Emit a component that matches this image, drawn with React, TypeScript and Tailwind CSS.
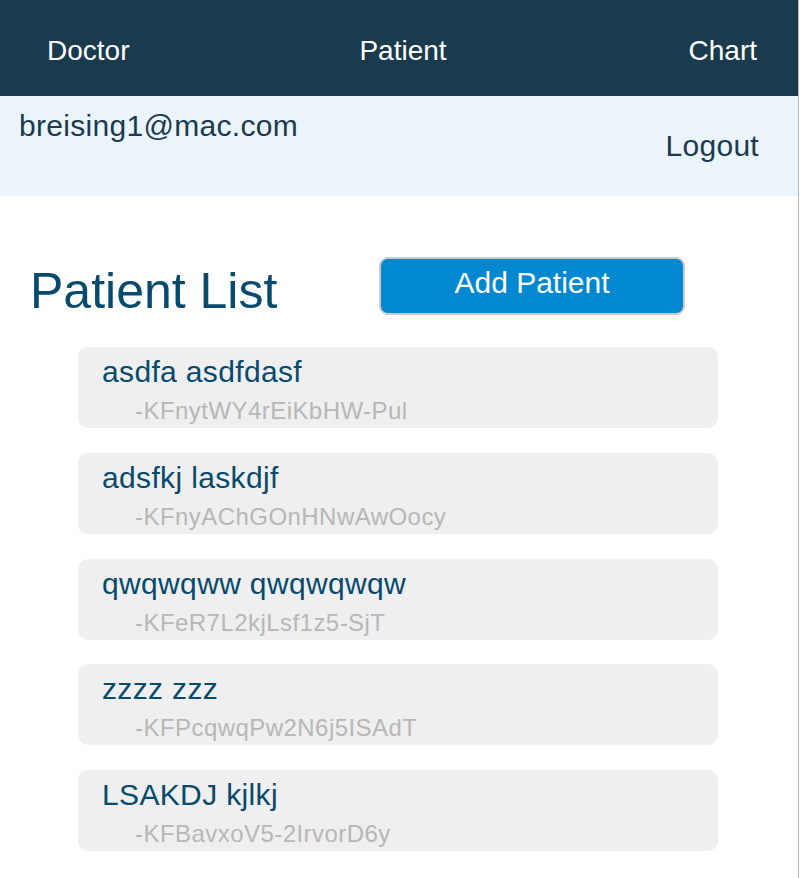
import React from "react";

const patients = [
  { name: "asdfa asdfdasf", id: "-KFnytWY4rEiKbHW-Pul" },
  { name: "adsfkj laskdjf", id: "-KFnyAChGOnHNwAwOocy" },
  { name: "qwqwqww qwqwqwqw", id: "-KFeR7L2kjLsf1z5-SjT" },
  { name: "zzzz zzz", id: "-KFPcqwqPw2N6j5ISAdT" },
  { name: "LSAKDJ kjlkj", id: "-KFBavxoV5-2IrvorD6y" },
];

export default function App() {
  return (
    <div
      className="w-[799px] min-h-[878px] bg-white border-r border-[#b8b8b8]"
      style={{ fontFamily: '"Liberation Sans", Arial, sans-serif' }}
    >
      <header className="h-[96px] bg-[#1a3a4e] flex items-center justify-between pl-[47px] pr-[41px] pt-[6px] text-white text-[28px] leading-none">
        <span>Doctor</span>
        <span className="mr-[12px]">Patient</span>
        <span>Chart</span>
      </header>
      <div className="h-[100px] bg-[#ebf4fb] flex justify-between items-start text-[#1b3a4f] text-[30px] leading-none">
        <span className="ml-[19px] mt-[15px] tracking-[0.3px]">breising1@mac.com</span>
        <span className="mr-[39px] mt-[35px] tracking-[0.3px]">Logout</span>
      </div>
      <div className="flex items-start pt-[61px]">
        <h1 className="w-[379px] pl-[30px] mt-[9px] text-[50px] leading-none text-[#064a6e] font-normal">
          Patient List
        </h1>
        <button className="w-[306px] h-[58px] rounded-[9px] border-2 border-[#c9c9c9] bg-[#0288d1] text-white text-[30px] leading-none flex items-center justify-center pb-[6px]">
          Add Patient
        </button>
      </div>
      <div className="mt-[31px] ml-[78px] w-[640px] flex flex-col gap-[24.75px]">
        {patients.map((p) => (
          <div key={p.id} className="h-[81px] rounded-[10px] bg-[#efefef] pl-[24px] pt-[10px]">
            <div className="text-[30px] leading-none text-[#064a6e] tracking-[0.35px]">{p.name}</div>
            <div className="ml-[33px] mt-[12px] text-[24px] leading-none text-[#b7b7b7] tracking-[0.45px]">
              {p.id}
            </div>
          </div>
        ))}
      </div>
    </div>
  );
}
